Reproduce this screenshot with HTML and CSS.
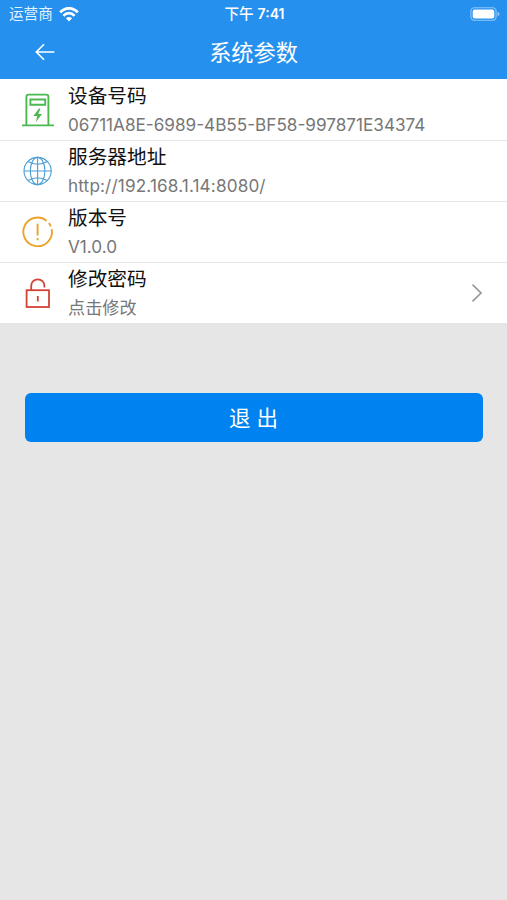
FILE: index.html
```html
<!DOCTYPE html>
<html lang="zh-CN">
<head>
<meta charset="utf-8">
<title>系统参数</title>
<link rel="stylesheet" href="styles.css">
</head>
<body>
<header class="header">
  <div class="status">
    <div class="carrier"><span>运营商</span>
      <svg width="20" height="15" viewBox="0 0 20 15" fill="none" stroke="#fff" stroke-width="2.7"><path d="M1.2 5.4C6-.1 14-.1 18.8 5.4"/><path d="M4.4 8.9C7.6 5.3 12.4 5.3 15.6 8.9"/><path d="M10 14.4 6.9 11.2Q10 8.6 13.1 11.2Z" fill="#fff" stroke="none"/></svg>
    </div>
    <div class="time">下午 <span class="clock">7:41</span></div>
    <svg class="battery" width="30" height="14" viewBox="0 0 30 14"><rect x=".9" y=".7" width="25.2" height="12.6" rx="3.6" fill="none" stroke="#8fc8fa" stroke-width="1.1"/><rect x="2.7" y="2.4" width="21.6" height="9.2" rx="2" fill="#fff"/><path d="M27.5 4.7Q29.6 5.4 29.6 7T27.5 9.3Z" fill="#8fc8fa"/></svg>
  </div>
  <div class="nav">
    <svg class="back" width="20" height="18" viewBox="0 0 20 18" fill="none" stroke="#fff" stroke-width="1.6"><path d="M9 1.2 1.3 9 9 16.8M1.3 9H19.4"/></svg>
    <h1 class="heading">系统参数</h1>
  </div>
</header>
<main>
  <ul class="list">
    <li class="row">
      <svg class="icon" width="36" height="36" viewBox="0 0 36 36" fill="none" stroke="#4cb850" stroke-width="1.9"><path d="M2 33.4H34M6.4 33V4.8Q6.4 2.6 8.6 2.6H26.2Q28.4 2.6 28.4 4.8V33M10.4 7.5H25.2V12.8H10.4Z"/><path d="M19 16.5 13.3 24H17.2L15.9 30 22 22H18.2L20.5 16.8Z" fill="#4cb850" stroke="none"/></svg>
      <div class="text"><div class="title">设备号码</div><div class="value">06711A8E-6989-4B55-BF58-997871E34374</div></div>
    </li>
    <li class="row">
      <svg class="icon" width="36" height="36" viewBox="0 0 36 36" fill="none" stroke="#4b9fd4" stroke-width="1.1"><circle cx="17.6" cy="18" r="13.6"/><ellipse cx="17.6" cy="18" rx="7.3" ry="13.6"/><path d="M17.6 4.4V31.6M4 18H31.2M8 8.5Q17.6 14 27.2 8.5M8 27.5Q17.6 22 27.2 27.5"/></svg>
      <div class="text"><div class="title">服务器地址</div><div class="value url">http://192.168.1.14:8080/</div></div>
    </li>
    <li class="row">
      <svg class="icon" width="36" height="36" viewBox="0 0 36 36" fill="none" stroke="#eba32b" stroke-width="1.9"><path d="M26.6 6.7A14.3 14.3 0 1 0 31.7 15.2M29 9 30.9 12.4M17.6 9.7V21.6M17.6 24V26.2"/></svg>
      <div class="text"><div class="title">版本号</div><div class="value">V1.0.0</div></div>
    </li>
    <li class="row">
      <svg class="icon" width="36" height="36" viewBox="0 0 36 36" fill="none" stroke="#d34238" stroke-width="1.8"><rect x="6.6" y="15.2" width="22.4" height="16.8"/><path d="M11.2 15.2V10.9A6.6 6.6 0 0 1 24.4 10.9V12.4M17.8 21V26.6"/></svg>
      <div class="text"><div class="title">修改密码</div><div class="value">点击修改</div></div>
      <svg class="chevron" width="12" height="20" viewBox="0 0 12 20" fill="none" stroke="#999" stroke-width="1.7"><path d="M1.5 1.7 10 10 1.5 18.3"/></svg>
    </li>
  </ul>
  <button class="logout" type="button">退 出</button>
</main>
</body>
</html>
```
FILE: styles.css
```css
* { box-sizing: border-box; }
body {
  margin: 0;
  min-height: 900px;
  background: #e6e6e6;
  font-family: Inter, "Noto Sans CJK SC", sans-serif;
}
.header { height: 79px; background: #2590ee; color: #fff; }
.status {
  display: grid;
  grid-template-columns: 1fr auto 1fr;
  align-items: center;
  height: 27px;
  padding: 0 7px 0 9px;
  font-size: 14.6px;
  line-height: 27px;
}
.carrier { display: flex; align-items: center; gap: 6px; color: #e4f3ff; }
.time { font-weight: 500; white-space: nowrap; }
.clock { font-weight: 600; font-size: 14px; }
.battery { justify-self: end; }
.nav {
  display: grid;
  grid-template-columns: 1fr auto 1fr;
  align-items: center;
  height: 50px;
}
.back { margin-left: 35px; }
.heading {
  grid-column: 2;
  margin: 0;
  padding-top: 1px;
  font-size: 22.2px;
  font-weight: 400;
  line-height: 30px;
}
.list { margin: 0; padding: 1px 0 0; background: #fff; list-style: none; }
.row {
  display: flex;
  align-items: center;
  height: 61px;
  padding: 0 24px 0 20px;
  border-bottom: 1px solid #e8e8e8;
}
.row:last-child { height: 60px; border-bottom: 0; }
.icon { flex: none; margin-right: 12px; }
.text { flex: 1; }
.title { font-size: 19.7px; line-height: 30px; color: #111; }
.value { font-size: 17.15px; line-height: 28px; color: #777; white-space: nowrap; }
.url { letter-spacing: .15px; }
.logout {
  display: block;
  width: 458px;
  height: 49px;
  margin: 70px auto 0;
  padding: 1px 0 0;
  border: 0;
  border-radius: 6px;
  background: #0082f0;
  color: #fff;
  font: 21.5px/48px Inter, "Noto Sans CJK SC", sans-serif;
}
```
